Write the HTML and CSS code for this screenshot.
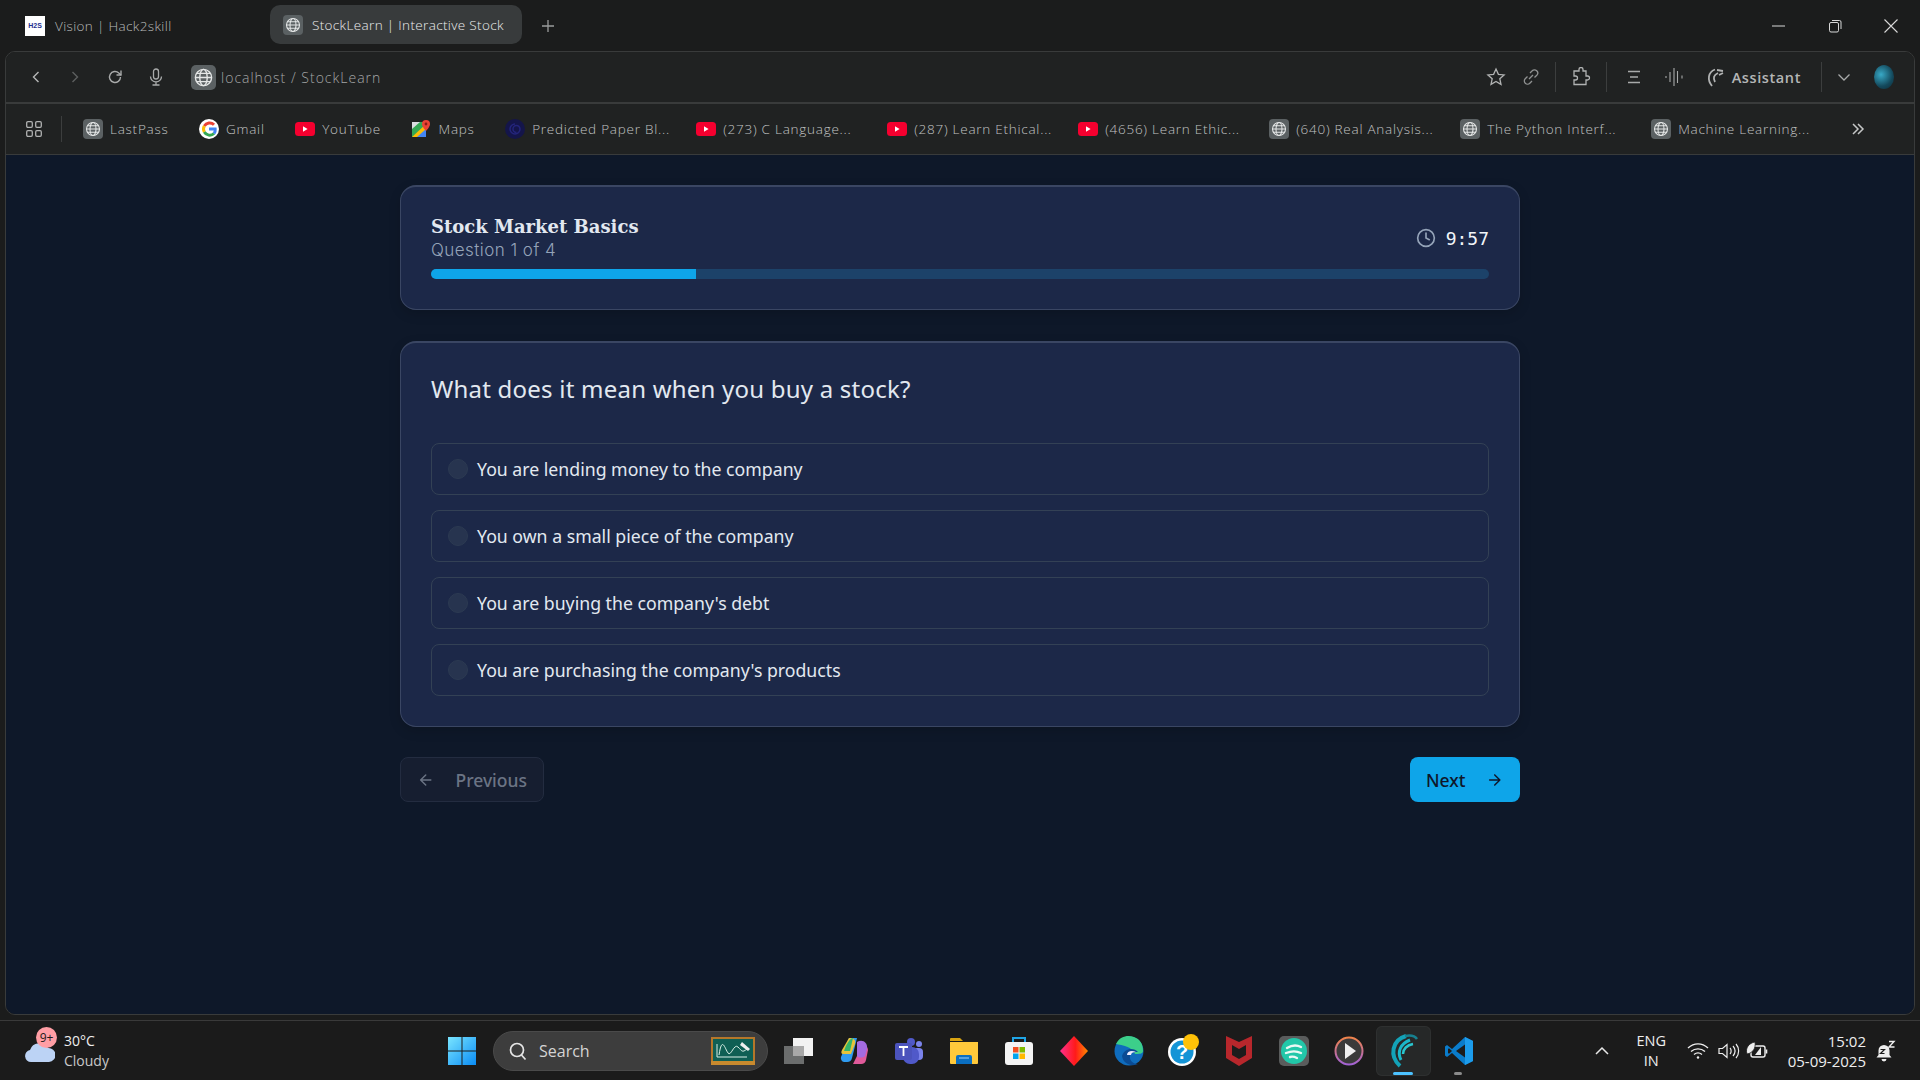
FILE: index.html
```html
<!DOCTYPE html>
<html lang="en">
<head>
	<meta charset="UTF-8">
	<meta name="viewport" content="width=device-width, initial-scale=1.0">
	<title>StockLearn | Interactive Stock</title>
	<link rel="stylesheet" href="styles.css">
</head>
<body>
	<svg class="defs" width="0" height="0">
		<symbol id="globe" viewBox="0 0 20 20">
			<rect width="20" height="20" rx="4" fill="#5b6163"/>
			<g fill="none" stroke="#e4e6e6" stroke-width="1.1">
				<circle cx="10" cy="10" r="6.5"/>
				<ellipse cx="10" cy="10" rx="3" ry="6.5"/>
				<path d="M3.5 10h13M4.500 6.700h11M4.500 13.300h11"/>
			</g>
		</symbol>
		<symbol id="yt" viewBox="0 0 20 14">
			<rect width="20" height="14" rx="3.500" fill="#f5002f"/>
			<path d="M8 4.200v5.600l4.600-2.800z" fill="#fff"/>
		</symbol>
	</svg>

	<!-- tab strip -->
	<div class="tabstrip">
		<div class="tab">
			<span class="hack-icon">H2S</span>
			<span>Vision | Hack2skill</span>
		</div>
		<div class="tab active">
			<svg class="fav"><use href="#globe"/></svg>
			<span class="tab-title">StockLearn | Interactive Stock</span>
		</div>
		<svg class="new-tab" width="14" height="14" viewBox="0 0 14 14"><path d="M7 1v12M1 7h12" stroke="#9a9c9c" stroke-width="1.300"/></svg>
		<div class="win-controls">
			<svg width="14" height="14" viewBox="0 0 14 14"><path d="M0 7h13" stroke="#d8d8d8" stroke-width="1"/></svg>
			<svg width="14" height="14" viewBox="0 0 14 14" fill="none" stroke="#d8d8d8"><rect x="1.500" y="3.500" width="9" height="9.500" rx="1.500"/><path d="M4 1.500h7.500a1.500 1.500 0 0 1 1.500 1.500v7"/></svg>
			<svg width="14" height="14" viewBox="0 0 14 14"><path d="M.5.500l13 13M13.500.500l-13 13" stroke="#d8d8d8" stroke-width="1.100"/></svg>
		</div>
	</div>

	<div class="frame">
		<!-- toolbar -->
		<div class="toolbar">
			<div class="nav-btns">
				<svg width="16" height="16" viewBox="0 0 16 16"><path d="M10.500 3L5.500 8l5 5" fill="none" stroke="#b5b7b7" stroke-width="1.400"/></svg>
				<svg width="16" height="16" viewBox="0 0 16 16"><path d="M5.500 3l5 5-5 5" fill="none" stroke="#5c5f5f" stroke-width="1.400"/></svg>
				<svg width="18" height="18" viewBox="0 0 18 18" fill="none" stroke="#a8aaaa" stroke-width="1.400"><path d="M14.500 9a5.500 5.500 0 1 1-1.700-4L15 7"/><path d="M15 2.500V7h-4.500"/></svg>
				<svg width="18" height="18" viewBox="0 0 18 18" fill="none" stroke="#a8aaaa" stroke-width="1.300"><rect x="6.500" y="1" width="5" height="10" rx="2.500"/><path d="M3.500 8.500a5.500 5.500 0 0 0 11 0M9 14v3M5.500 17h7"/></svg>
			</div>
			<div class="address">
				<svg class="addr-globe"><use href="#globe"/></svg>
				<span>localhost / StockLearn</span>
			</div>
			<div class="tools">
				<svg class="tool-star" width="20" height="20" viewBox="0 0 20 20"><path d="M10 2l2.400 5.300 5.700.6-4.300 3.800 1.200 5.700L10 14.500l-5 2.900 1.200-5.700L1.900 7.900l5.700-.6z" fill="none" stroke="#b0b2b2" stroke-width="1.300"/></svg>
				<svg class="tool-link" width="18" height="18" viewBox="0 0 18 18" fill="none" stroke="#909292" stroke-width="1.300"><path d="M8 5l2.200-2.200a3 3 0 0 1 4.600 4.400L12.500 9.500M10 13l-2.200 2.200a3 3 0 0 1-4.600-4.400L5.500 8.500M7 11l4-4"/></svg>
				<i class="tool-sep"></i>
				<svg class="tool-puzzle" width="20" height="20" viewBox="0 0 20 20"><path d="M8 2.500a2 2 0 0 1 4 0V4h5v5h-1.500a2 2 0 0 0 0 4H17v4.500H5V13H3.500a2 2 0 0 1 0-4H5V4h3z" fill="none" stroke="#b0b2b2" stroke-width="1.300" transform="translate(20 0) scale(-1 1)"/></svg>
				<i class="tool-sep sep-b"></i>
				<svg class="tool-list" width="16" height="16" viewBox="0 0 16 16"><path d="M2 2.500h12M4 8h8M2 13.500h12" stroke="#a8aaaa" stroke-width="1.400"/></svg>
				<svg class="tool-wave" width="20" height="20" viewBox="0 0 20 20"><path d="M1 9v2M5 5v10M9 1v18M12.500 4v12M17 8.500v3" stroke="#a8aaaa" stroke-width="1.100"/></svg>
				<svg class="tool-ast" width="18" height="20" viewBox="0 0 18 20" fill="none" stroke="#b0b2b2" stroke-width="1.800"><path d="M6 19C1 13 2 5 9 2.500"/><path d="M9 15c-2-4-1.500-7 3-9"/><path d="M11 3l6 1M13 8l4-2"/></svg>
				<span class="ast-label">Assistant</span>
				<i class="tool-sep sep-c"></i>
				<svg class="tool-chev" width="14" height="14" viewBox="0 0 14 14"><path d="M1.500 4.500L7 10l5.500-5.500" fill="none" stroke="#a8aaaa" stroke-width="1.300"/></svg>
				<i class="orb"></i>
			</div>
		</div>

		<!-- bookmarks -->
		<div class="bookmarks">
			<svg class="bm-grid" width="16" height="16" viewBox="0 0 16 16" fill="none" stroke="#b0b2b2" stroke-width="1.300"><rect x=".7" y=".7" width="5.600" height="5.600" rx="1.200"/><rect x="9.700" y=".7" width="5.600" height="5.600" rx="1.200"/><rect x=".7" y="9.700" width="5.600" height="5.600" rx="1.200"/><rect x="9.700" y="9.700" width="5.600" height="5.600" rx="1.200"/></svg>
			<i class="bm-sep"></i>
			<div class="bm-list">
				<div class="bm"><svg class="bm-icon"><use href="#globe"/></svg>LastPass</div>
				<div class="bm">
					<svg class="bm-icon" viewBox="0 0 20 20"><circle cx="10" cy="10" r="10" fill="#fff"/><g fill="none" stroke-width="3"><path d="M15 5.700A6.200 6.200 0 0 0 5.300 7" stroke="#ea4335"/><path d="M5.300 7a6.300 6.300 0 0 0 0 6" stroke="#fbbc05"/><path d="M5.300 13a6.200 6.200 0 0 0 9.700 1.500" stroke="#34a853"/><path d="M15 14.500a5.700 5.700 0 0 0 1.200-4.400H10" stroke="#4285f4"/></g></svg>
					Gmail
				</div>
				<div class="bm"><svg class="bm-icon"><use href="#yt"/></svg>YouTube</div>
				<div class="bm">
					<svg class="bm-icon" viewBox="0 0 20 20"><path d="M1 3h14v15H1z" fill="#34a853"/><path d="M1 18L15 5v13z" fill="#fbbc05"/><path d="M6 18l9-8v8z" fill="#4285f4"/><path d="M1 3h8L1 10z" fill="#dadce0"/><path d="M15 1a4 4 0 0 1 4 4c0 3-4 7-4 7s-4-4-4-7a4 4 0 0 1 4-4z" fill="#ea4335"/><circle cx="15" cy="5" r="1.400" fill="#8c1c13"/></svg>
					Maps
				</div>
				<div class="bm bm-cut">
					<svg class="bm-icon" viewBox="0 0 20 20"><circle cx="10" cy="10" r="10" fill="#14154a"/><path d="M10 5a5 5 0 1 0 5 5 3.500 3.500 0 1 0-3.500 3.500" fill="none" stroke="#23247a" stroke-width="1.500"/></svg>
					Predicted Paper Bl...
				</div>
				<div class="bm bm-cut"><svg class="bm-icon"><use href="#yt"/></svg>(273) C Language...</div>
				<div class="bm bm-cut"><svg class="bm-icon"><use href="#yt"/></svg>(287) Learn Ethical...</div>
				<div class="bm bm-cut"><svg class="bm-icon"><use href="#yt"/></svg>(4656) Learn Ethic...</div>
				<div class="bm bm-cut"><svg class="bm-icon"><use href="#globe"/></svg>(640) Real Analysis...</div>
				<div class="bm bm-cut"><svg class="bm-icon"><use href="#globe"/></svg>The Python Interf...</div>
				<div class="bm bm-cut"><svg class="bm-icon"><use href="#globe"/></svg>Machine Learning...</div>
			</div>
			<svg class="bm-more" width="14" height="14" viewBox="0 0 14 14" fill="none" stroke="#c4c6c6" stroke-width="1.500"><path d="M2 2l5 5-5 5M7 2l5 5-5 5"/></svg>
		</div>

		<!-- page -->
		<main class="page">
			<div class="quiz">
				<section class="card head-card">
					<div class="head-row">
						<div>
							<h1>Stock Market Basics</h1>
							<p class="q-count">Question 1 of 4</p>
						</div>
						<div class="timer">
							<svg width="20" height="20" viewBox="0 0 24 24" fill="none" stroke="#94a3b8" stroke-width="2" stroke-linecap="round"><circle cx="12" cy="12" r="10"/><path d="M12 6v6l4 2"/></svg>
							<span>9:57</span>
						</div>
					</div>
					<div class="progress"><div class="progress-fill" style="width: 25%"></div></div>
				</section>

				<section class="card q-card">
					<h2>What does it mean when you buy a stock?</h2>
					<div class="options">
						<div class="option"><i class="radio"></i><span>You are lending money to the company</span></div>
						<div class="option"><i class="radio"></i><span>You own a small piece of the company</span></div>
						<div class="option"><i class="radio"></i><span>You are buying the company's debt</span></div>
						<div class="option"><i class="radio"></i><span>You are purchasing the company's products</span></div>
					</div>
				</section>

				<div class="quiz-nav">
					<button class="btn btn-prev">
						<svg width="18" height="18" viewBox="0 0 24 24" fill="none" stroke="currentColor" stroke-width="2" stroke-linecap="round" stroke-linejoin="round"><path d="M19 12H5M12 19l-7-7 7-7"/></svg>
						Previous
					</button>
					<button class="btn btn-next">
						Next
						<svg width="18" height="18" viewBox="0 0 24 24" fill="none" stroke="currentColor" stroke-width="2" stroke-linecap="round" stroke-linejoin="round"><path d="M5 12h14M12 5l7 7-7 7"/></svg>
					</button>
				</div>
			</div>
		</main>
	</div>

	<!-- taskbar -->
	<footer class="taskbar">
		<div class="weather">
			<svg width="32" height="32" viewBox="0 0 32 32"><path d="M8 27a6 6 0 0 1-1-11.900A10 10 0 0 1 25 13a7 7 0 0 1 1 14z" fill="#bcd3f5"/></svg>
			<span class="weather-badge">9+</span>
			<div class="weather-text"><span>30°C</span><span class="dim">Cloudy</span></div>
		</div>
		<svg class="start" width="30" height="30" viewBox="0 0 30 30">
			<defs><linearGradient id="win" x1="0" y1="0" x2="1" y2="1"><stop offset="0" stop-color="#7ae5ff"/><stop offset="1" stop-color="#0a8cf5"/></linearGradient></defs>
			<path d="M1 1h13.500v13.500H1zM15.500 1H29v13.500H15.500zM1 15.500h13.500V29H1zM15.500 15.500H29V29H15.500z" fill="url(#win)"/>
		</svg>
		<div class="search">
			<svg width="20" height="20" viewBox="0 0 20 20" fill="none" stroke="#e6e6e6" stroke-width="1.700"><circle cx="9" cy="9" r="6.500"/><path d="M13.500 14l4 4.500"/></svg>
			<span>Search</span>
			<svg class="search-art" width="44" height="28" viewBox="0 0 44 28"><rect x="1" y="1" width="42" height="24" fill="#0f5f54" stroke="#b5772a" stroke-width="2"/><rect y="24" width="44" height="4" fill="#c88a2e"/><path d="M6 20V7M6 20h30M8 18c3-20 6-6 9-2s6-10 10-6 4 6 9 2" fill="none" stroke="#d8efe6" stroke-width="1"/><path d="M31 5l8 7-2 2-8-6z" fill="#eee"/></svg>
		</div>
		<div class="apps">
			<div class="app">
				<svg width="32" height="30" viewBox="0 0 32 30"><rect x="1" y="10" width="20" height="18" fill="#6b6d6d"/><rect x="10" y="2" width="20" height="18" fill="#f2f2f2"/><rect x="10" y="10" width="11" height="10" fill="#a8a8a8"/></svg>
			</div>
			<div class="app">
				<svg width="30" height="30" viewBox="0 0 30 30"><path d="M10 2h8l-5 20a5 5 0 0 1-5 4H5a4 4 0 0 1-3-5z" fill="#2f9bf0"/><path d="M10 2c4 0 7 1 6 6l-4 10H4c-2 0-2-2-1-4z" fill="#e5c33b"/><path d="M5 15c2-6 5-12 9-13l-3 13z" fill="#35b56a"/><path d="M14 28h8a5 5 0 0 0 5-4l2-10c0-4-3-5-6-4z" fill="#e05a9a"/><path d="M18 6c5-3 11 0 10 7l-2 7c-2 2-7 2-8 0z" fill="#a46be0"/></svg>
			</div>
			<div class="app">
				<svg width="30" height="30" viewBox="0 0 30 30"><circle cx="25" cy="8" r="3" fill="#7b83eb"/><rect x="19" y="12" width="10" height="12" rx="4" fill="#7b83eb"/><circle cx="17" cy="6" r="4" fill="#5059c9"/><rect x="9" y="11" width="16" height="17" rx="7" fill="#5059c9"/><rect x="1" y="7" width="17" height="17" rx="2" fill="#4b53bc"/><path d="M5 11h9M9.500 11v9" stroke="#fff" stroke-width="1.800"/></svg>
			</div>
			<div class="app">
				<svg width="30" height="30" viewBox="0 0 30 30"><path d="M1 3a1 1 0 0 1 1-1h9l3 3h-13z" fill="#d9a412"/><path d="M1 6h28v21a1 1 0 0 1-1 1H2a1 1 0 0 1-1-1z" fill="#ffc93b"/><path d="M7 28v-7a2 2 0 0 1 2-2h12a2 2 0 0 1 2 2v7z" fill="#0a6fc2"/><path d="M10 22h10" stroke="#9fd3ff" stroke-width="1"/></svg>
			</div>
			<div class="app">
				<svg width="30" height="30" viewBox="0 0 30 30"><path d="M9 7V2h12v5" fill="none" stroke="#1fa5e6" stroke-width="2"/><rect x="1" y="6" width="28" height="23" rx="3" fill="#f4f4f4"/><path d="M9 11h5.500v5.500H9z" fill="#f25022"/><path d="M15.500 11H21v5.500h-5.500z" fill="#7fba00"/><path d="M9 17.500h5.500V23H9z" fill="#00a4ef"/><path d="M15.500 17.500H21V23h-5.500z" fill="#ffb900"/></svg>
			</div>
			<div class="app">
				<svg width="30" height="30" viewBox="0 0 30 30"><defs><linearGradient id="dia"><stop offset="0" stop-color="#ff2f8e"/><stop offset=".55" stop-color="#ff1a1a"/><stop offset="1" stop-color="#ff8a00"/></linearGradient></defs><path d="M15 0l14 15-14 15L1 15z" fill="url(#dia)"/></svg>
			</div>
			<div class="app">
				<svg width="30" height="30" viewBox="0 0 30 30"><circle cx="15" cy="15" r="14.500" fill="#0f6cbd"/><path d="M2 8C6 0 14-1 20 1c6 2 9 7 9 14 0 3-4 3-8 3-2-7-13-9-19-10z" fill="#3ccf8a"/><path d="M8 20c2-8 12-9 16-4-3 0-7 0-8 4s3 8 8 8c-6 3-15 0-16-8z" fill="#0a4b94"/><path d="M13 19c0-4 5-5 9-3-3 0-5 1-5 3" fill="#eef"/></svg>
			</div>
			<div class="app">
				<svg width="34" height="34" viewBox="0 0 34 34"><circle cx="15" cy="18" r="14" fill="#fff"/><circle cx="15" cy="18" r="11.500" fill="#1494d6"/><text x="15" y="25" text-anchor="middle" class="help-q">?</text><circle cx="24" cy="8" r="8" fill="#ffc107"/></svg>
			</div>
			<div class="app">
				<svg width="28" height="32" viewBox="0 0 28 32"><path d="M1 1l13 6 13-6v22L14 31 1 23z" fill="#b8272c"/><path d="M7 10l7 4 7-4v10l-7 4-7-4z" fill="#1c1c1c"/></svg>
			</div>
			<div class="app">
				<svg width="30" height="30" viewBox="0 0 30 30"><rect width="30" height="30" rx="5" fill="#5a5c5c"/><circle cx="15" cy="15" r="13" fill="#22c7a9"/><path d="M8 12c5-3 10-3 14-1M7 17c5-2 11-2 15 0M11 21c3-1 5 0 7 1" fill="none" stroke="#eaf8f4" stroke-width="2.400" stroke-linecap="round"/></svg>
			</div>
			<div class="app">
				<svg width="30" height="30" viewBox="0 0 30 30"><defs><linearGradient id="ring" x1="0" y1="0" x2="0" y2="1"><stop offset="0" stop-color="#f0834a"/><stop offset="1" stop-color="#a262d4"/></linearGradient></defs><circle cx="15" cy="15" r="13.500" fill="#3a3a3a" stroke="url(#ring)" stroke-width="2"/><path d="M11 7l11 8-11 8z" fill="#efefef"/></svg>
			</div>
			<div class="app app-active">
				<svg width="32" height="34" viewBox="0 0 32 34" fill="none"><path d="M12 32C1 22 4 6 18 2" stroke="#13a3b8" stroke-width="4"/><path d="M13 26C9 18 12 10 22 6" stroke="#1bb7c9" stroke-width="3"/><path d="M15 20c0-5 4-9 10-10" stroke="#29c6cf" stroke-width="2.500"/><path d="M17 2c5-1 10 0 12 3" stroke="#17808f" stroke-width="2.500"/></svg>
				<i class="app-line"></i>
			</div>
			<div class="app">
				<svg width="30" height="30" viewBox="0 0 30 30"><path d="M21 1l8 4v20l-8 4-13-12-5 4-2-1.500V10.500L3 9l5 4z" fill="#0a7ccb"/><path d="M21 1l8 4v20l-8 4z" fill="#1c9cec"/><path d="M21 8.500L12 15l9 6.500z" fill="#1c1c1c"/><path d="M5 12.200l-1 .8v4l1 .8L8 15z" fill="#1c1c1c"/></svg>
				<i class="app-dot"></i>
			</div>
		</div>
		<div class="tray">
			<svg class="tray-chev" width="14" height="14" viewBox="0 0 14 14"><path d="M1 10l6-6 6 6" fill="none" stroke="#e8e8e8" stroke-width="1.500"/></svg>
			<div class="lang"><span>ENG</span><span>IN</span></div>
			<svg class="tray-wifi" width="22" height="18" viewBox="0 0 22 18" fill="none" stroke="#eee" stroke-width="1.400"><path d="M1 6c6-5.500 14-5.500 20 0M4 9.500c4-3.500 10-3.500 14 0M7 12.500c2.500-2 5.500-2 8 0"/><circle cx="11" cy="15.500" r="1.200" fill="#eee" stroke="none"/></svg>
			<svg class="tray-vol" width="22" height="18" viewBox="0 0 22 18" fill="none" stroke="#eee" stroke-width="1.200"><path d="M1 6.500h3.500L9 2.500v13l-4.500-4H1z"/><path d="M12 6c1.500 1.500 1.500 4.500 0 6M15 4c2.500 3 2.500 7 0 10M18 2c3.500 4 3.500 10 0 14"/></svg>
			<svg class="tray-bat" width="24" height="20" viewBox="0 0 24 20"><rect x="6" y="5" width="14" height="11" rx="2" fill="none" stroke="#eee" stroke-width="1.400"/><path d="M21.500 8.500v4" stroke="#eee" stroke-width="1.600"/><path d="M10 14l6-8v8z" fill="#eee"/><path d="M2 13C0 7 4 2 10 1c1 6-2 11-8 12z" fill="#eee" stroke="#1b1b1b" stroke-width=".8"/></svg>
			<div class="clock"><span>15:02</span><span>05-09-2025</span></div>
			<svg class="tray-bell" width="22" height="22" viewBox="0 0 22 22"><path d="M9 5a5.500 5.500 0 0 1 5.500 5.500V15l2 2.500h-15l2-2.500v-4.500A5.500 5.500 0 0 1 9 5z" fill="#eee"/><path d="M6.500 19a2.500 2.500 0 0 0 5 0z" fill="#eee"/><path d="M5.500 9.500h4l-4 4h4" fill="none" stroke="#1b1b1b" stroke-width="1.200"/><path d="M14 1.500h5l-5 5.500h5.500" fill="none" stroke="#eee" stroke-width="1.400"/></svg>
		</div>
	</footer>
</body>
</html>
```

FILE: styles.css
```css
* {
	box-sizing: border-box;
}

html,
body {
	margin: 0;
	height: 100%;
}

body {
	display: flex;
	flex-direction: column;
	height: 1080px;
	overflow: hidden;
	background-color: #1b1c1c;
	font-family: "Open Sans", "Noto Sans", sans-serif;
	color: #e2e8f0;
}

.defs {
	position: absolute;
}

/* tab strip */
.tabstrip {
	display: flex;
	align-items: center;
	height: 51px;
	padding-left: 25px;
	font-size: 13.500px;
	font-weight: 300;
	letter-spacing: 0.350px;
	color: #b8baba;
	flex-shrink: 0;
}

.tab {
	display: flex;
	align-items: center;
	gap: 10px;
	height: 39px;
	width: 245px;
}

.tab.active {
	width: 252px;
	padding: 0 13px;
	gap: 9px;
	margin-top: -2px;
	border-radius: 10px;
	background-color: #383b3c;
	color: #eceded;
	white-space: nowrap;
	overflow: hidden;
}

.tab-title {
	overflow: hidden;
}

.hack-icon {
	display: flex;
	align-items: center;
	justify-content: center;
	width: 20px;
	height: 20px;
	background-color: #fff;
	color: #1f2f8f;
	font-size: 7px;
	font-weight: 700;
	letter-spacing: 0;
	font-family: "Liberation Sans", sans-serif;
}

.fav {
	width: 20px;
	height: 24px;
	flex-shrink: 0;
}

.new-tab {
	margin-left: 19px;
}

.win-controls {
	display: flex;
	gap: 42px;
	margin-left: auto;
	padding-right: 22px;
}

/* browser frame */
.frame {
	display: flex;
	flex-direction: column;
	height: 964px;
	margin: 0 5px;
	border: 1px solid #393b3b;
	border-radius: 10px;
	overflow: hidden;
	flex-shrink: 0;
}

.toolbar {
	display: flex;
	align-items: center;
	height: 52px;
	padding-left: 22px;
	border-bottom: 2px solid #393b3b;
	background-color: #202222;
	flex-shrink: 0;
}

.nav-btns {
	display: flex;
	align-items: center;
	gap: 23px;
}

.address {
	display: flex;
	align-items: center;
	gap: 5px;
	margin-left: 26px;
	font-size: 14px;
	font-weight: 300;
	letter-spacing: 1px;
	color: #a4a6a6;
}

.addr-globe {
	width: 25px;
	height: 25px;
}

.tools {
	display: flex;
	align-items: center;
	margin-left: auto;
	padding-right: 20px;
}

.tool-link { margin-left: 16px; }
.tool-sep {
	width: 1px;
	height: 30px;
	margin-left: 15px;
	background-color: #3c3e3e;
}
.tool-puzzle { margin-left: 15px; }
.sep-b { margin-left: 15px; }
.tool-list { margin-left: 19px; }
.tool-wave { margin-left: 23px; }
.tool-ast { margin-left: 21px; }

.ast-label {
	margin-left: 8px;
	font-size: 14.500px;
	font-weight: 600;
	letter-spacing: 0.600px;
	color: #b4b6b6;
}

.sep-c { margin-left: 20px; }
.tool-chev { margin-left: 15px; }

.orb {
	width: 20px;
	height: 24px;
	margin-left: 23px;
	border-radius: 50%;
	background: radial-gradient(circle at 35% 40%, #38a9c6, #14495c 60%, #0d2a36);
}

/* bookmarks */
.bookmarks {
	display: flex;
	align-items: center;
	height: 51px;
	padding-left: 20px;
	border-bottom: 1px solid #393b3b;
	background-color: #202222;
	flex-shrink: 0;
}

.bm-sep {
	width: 1px;
	height: 26px;
	margin-left: 19px;
	background-color: #3c3e3e;
}

.bm-list {
	display: flex;
	gap: 30.500px;
	margin-left: 21px;
}

.bm {
	display: flex;
	align-items: center;
	gap: 7px;
	font-size: 13.500px;
	font-weight: 300;
	letter-spacing: 0.750px;
	color: #c0c2c2;
	white-space: nowrap;
}

.bm-cut {
	width: 160.500px;
}

.bm-icon {
	width: 20px;
	height: 20px;
	flex-shrink: 0;
}

.bm-more {
	margin-left: 39px;
}

/* page */
.page {
	flex: 1;
	padding-top: 30px;
	background-color: #0e1829;
}

.quiz {
	display: flex;
	flex-direction: column;
	width: 1120px;
	margin: 0 auto;
	font-family: "Noto Sans", sans-serif;
}

.card {
	padding: 30px;
	border: 1px solid #3a4663;
	border-top-width: 2px;
	border-radius: 16px;
	background-color: #1c2848;
	box-shadow: 0 4px 12px rgba(0, 0, 0, 0.15);
}

.head-card {
	height: 125px;
	padding-top: 28px;
}

.head-row {
	display: flex;
	align-items: center;
	justify-content: space-between;
	margin-bottom: 8px;
}

h1 {
	margin: 0;
	font-family: "DejaVu Serif", serif;
	font-size: 18px;
	font-weight: 700;
	line-height: 24px;
	color: #e2e8f0;
}

.q-count {
	margin: 0;
	font-family: "Inter", sans-serif;
	font-size: 17px;
	font-weight: 300;
	letter-spacing: 0.450px;
	line-height: 22px;
	color: #94a3b8;
}

.timer {
	display: flex;
	align-items: center;
	gap: 10px;
	font-family: "DejaVu Sans Mono", monospace;
	font-size: 18px;
	color: #f1f5f9;
}

.progress {
	height: 10px;
	border-radius: 5px;
	background-color: #1c4269;
	overflow: hidden;
}

.progress-fill {
	height: 100%;
	background-color: #0ea5e9;
}

.q-card {
	height: 386px;
	margin-top: 31px;
	padding-top: 28px;
}

h2 {
	margin: 0 0 36px;
	font-size: 24px;
	font-weight: 400;
	letter-spacing: 0.220px;
	line-height: 36px;
	color: #e2e8f0;
}

.options {
	display: flex;
	flex-direction: column;
	gap: 15px;
}

.option {
	display: flex;
	align-items: center;
	gap: 9px;
	height: 52px;
	padding: 0 16px;
	border: 1px solid #334155;
	border-radius: 8px;
	font-size: 17.700px;
	color: #e2e8f0;
}

.radio {
	width: 20px;
	height: 20px;
	border: 1px solid #2c3a52;
	border-radius: 50%;
	background-color: #27344f;
}

.quiz-nav {
	display: flex;
	justify-content: space-between;
	margin-top: 30px;
}

.btn {
	display: flex;
	align-items: center;
	height: 45px;
	border-radius: 8px;
	font-family: "Noto Sans", sans-serif;
	font-size: 17.500px;
	font-weight: 500;
}

.btn-prev {
	gap: 21px;
	width: 144px;
	padding: 0 16px;
	border: 1px solid #232c40;
	background-color: #161e30;
	color: #6b7484;
}

.btn-next {
	gap: 21px;
	width: 110px;
	padding: 0 16px;
	border: none;
	background-color: #0ea5e9;
	color: #0f172a;
}

/* taskbar */
.taskbar {
	display: flex;
	align-items: center;
	height: 61px;
	margin-top: 5px;
	padding-left: 23px;
	border-top: 1px solid #3a3a3a;
	background-color: #1b1b1b;
	font-family: "Open Sans", sans-serif;
	color: #eee;
	flex-shrink: 0;
}

.weather {
	display: flex;
	align-items: center;
	position: relative;
	width: 424px;
	gap: 9px;
	font-size: 14px;
}

.weather-badge {
	position: absolute;
	left: 13px;
	top: -4px;
	width: 21px;
	height: 21px;
	border-radius: 50%;
	background-color: #ff9ea5;
	color: #1b1b1b;
	font-size: 12px;
	line-height: 21px;
	text-align: center;
}

.weather-text {
	display: flex;
	flex-direction: column;
	line-height: 20px;
}

.dim {
	color: #c8c8c8;
}

.search {
	display: flex;
	align-items: center;
	gap: 11px;
	width: 275px;
	height: 40px;
	margin-left: 16px;
	padding: 0 14px;
	border: 1px solid #4a4a4a;
	border-radius: 20px;
	background-color: #3d3d3d;
	font-size: 16px;
	color: #d4d4d4;
}

.search-art {
	margin-left: auto;
	margin-right: -2px;
}

.apps {
	display: flex;
	margin-left: 3px;
}

.app {
	display: flex;
	align-items: center;
	justify-content: center;
	position: relative;
	width: 55px;
	height: 50px;
}

.app-active {
	border-radius: 6px;
	background-color: #262828;
	box-shadow: inset 0 0 0 1px #2e3030;
}

.app-line {
	position: absolute;
	bottom: 1px;
	left: 17px;
	width: 20px;
	height: 3px;
	border-radius: 2px;
	background-color: #4cc2ff;
}

.app-dot {
	position: absolute;
	bottom: 1px;
	left: 23px;
	width: 8px;
	height: 3px;
	border-radius: 2px;
	background-color: #8a8a8a;
}

.help-q {
	fill: #fff;
	font-family: "Liberation Sans", sans-serif;
	font-size: 20px;
	font-weight: 700;
}

.tray {
	display: flex;
	align-items: center;
	margin-left: auto;
	padding-right: 23px;
	font-size: 15px;
}

.lang {
	display: flex;
	flex-direction: column;
	align-items: center;
	line-height: 20px;
	margin-left: 27px;
	font-size: 14.500px;
}

.tray-wifi { margin-left: 21px; }
.tray-vol { margin-left: 9px; }
.tray-bat { margin-left: 5px; }

.clock {
	display: flex;
	flex-direction: column;
	align-items: flex-end;
	width: 88px;
	margin-left: 9px;
	line-height: 20px;
}

.tray-bell {
	margin-left: 9px;
}
```
